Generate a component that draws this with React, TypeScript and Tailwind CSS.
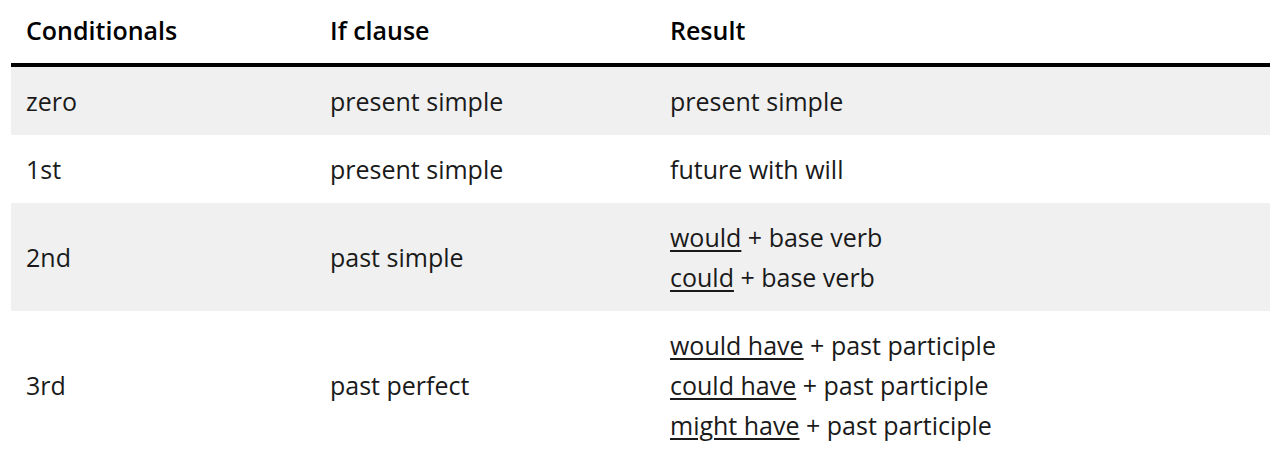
const ROWS: { name: string; ifc: string; result: [string, string][] }[] = [
  { name: "zero", ifc: "present simple", result: [["", "present simple"]] },
  { name: "1st", ifc: "present simple", result: [["", "future with will"]] },
  {
    name: "2nd",
    ifc: "past simple",
    result: [
      ["would", " + base verb"],
      ["could", " + base verb"],
    ],
  },
  {
    name: "3rd",
    ifc: "past perfect",
    result: [
      ["would have", " + past participle"],
      ["could have", " + past participle"],
      ["might have", " + past participle"],
    ],
  },
];

const COLS = "grid grid-cols-[304px_340px_1fr]";

export default function App() {
  return (
    <div className="bg-white w-[1288px] h-[460px] overflow-hidden pl-[11px] font-['Open_Sans',sans-serif] text-[25px] text-[#1a1a1a]">
      <div className="w-[1259px]">
        <div className={`${COLS} h-[67px] pb-[2px] border-b-4 border-black items-center font-semibold text-black`}>
          <div className="pl-[15px]">Conditionals</div>
          <div className="pl-[15px]">If clause</div>
          <div className="pl-[15px]">Result</div>
        </div>
        {ROWS.map((r, i) => (
          <div key={r.name} className={`${COLS} items-center py-[14px] leading-[40px] ${i % 2 === 0 ? "bg-[#f0f0f0]" : "bg-white"}`}>
            <div className="pl-[15px]">{r.name}</div>
            <div className="pl-[15px]">{r.ifc}</div>
            <div className="pl-[15px]">
              {r.result.map(([u, rest], j) => (
                <div key={j}>
                  {u && <span className="underline decoration-2 underline-offset-[3px]">{u}</span>}
                  {rest}
                </div>
              ))}
            </div>
          </div>
        ))}
      </div>
    </div>
  );
}
